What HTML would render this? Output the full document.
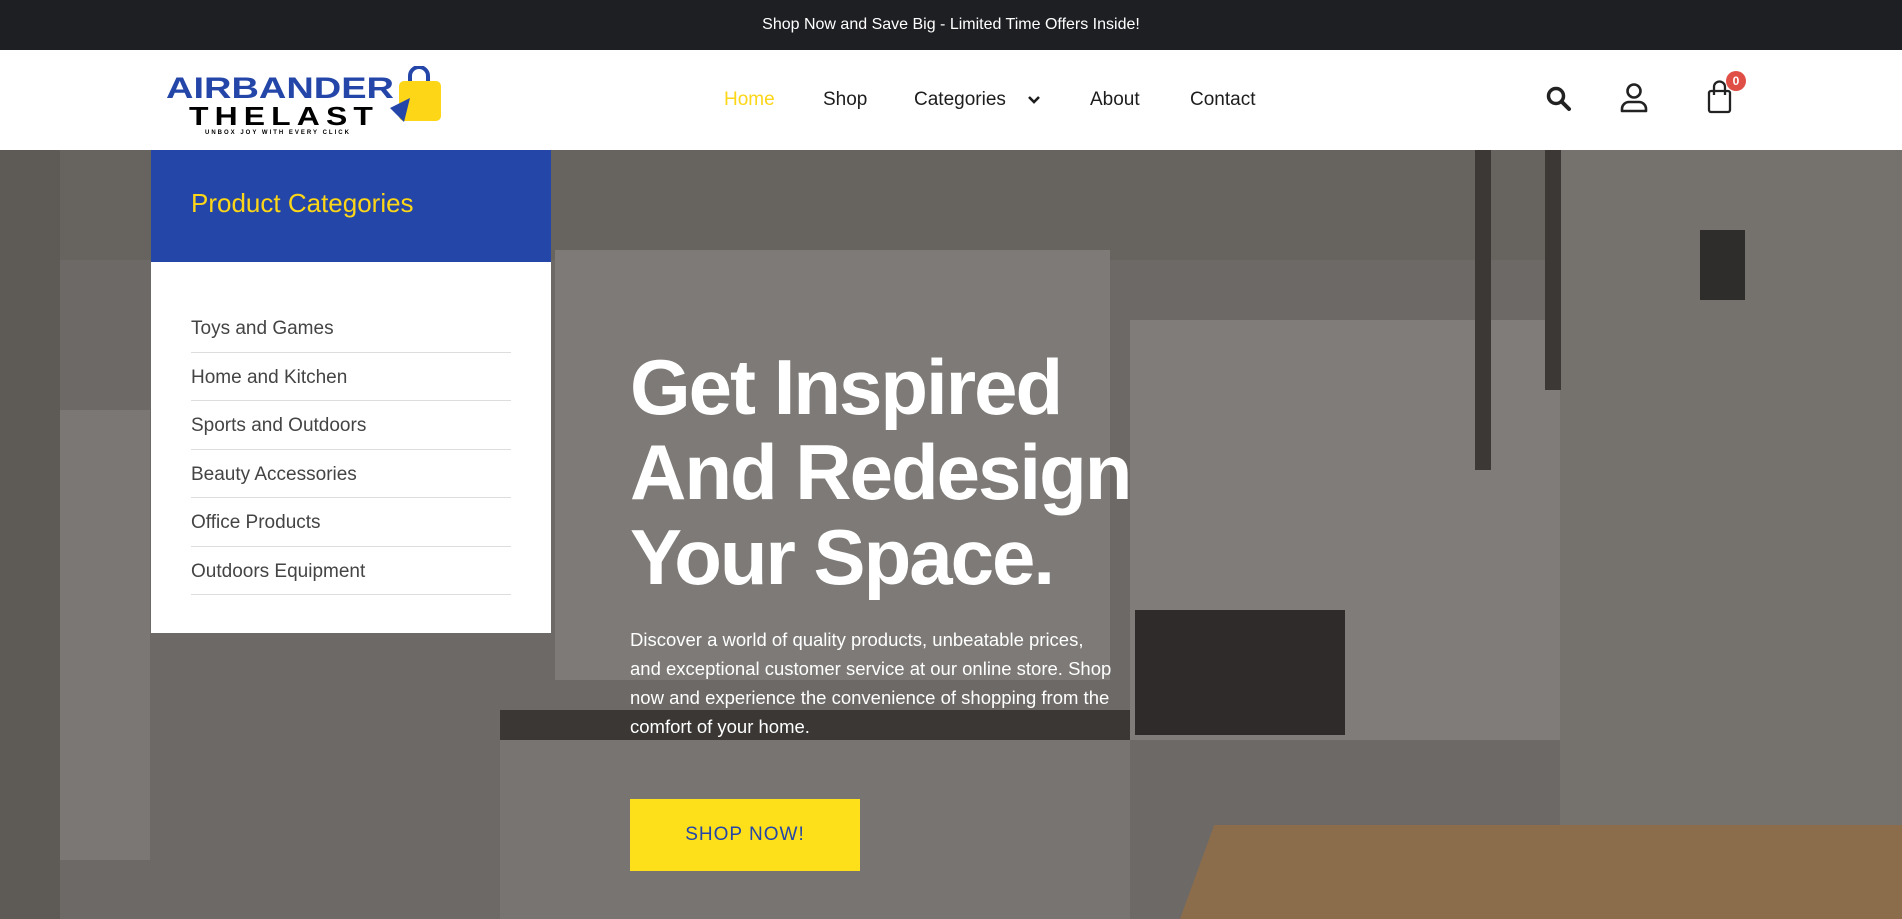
<!DOCTYPE html>
<html><head><meta charset="utf-8"><style>
*{margin:0;padding:0;box-sizing:border-box}
body{width:1902px;height:919px;overflow:hidden;font-family:"Liberation Sans",sans-serif;background:#fff}
.top{height:50px;background:#1e1f23;color:#fff;font-size:16px;text-align:center;line-height:50px}
.hdr{height:100px;position:relative;background:#fff}
.nav a{position:absolute;top:89px;font-size:19px;color:#1d1d1d;text-decoration:none;font-weight:500}
.hero{position:absolute;top:150px;left:0;width:1902px;height:769px;background:#6d6966;overflow:hidden}
.hero div{position:absolute}
.cat{position:absolute;left:151px;top:150px;width:400px}
.cath{height:112px;background:#2446a8;color:#fcd617;font-size:26px;padding:38px 0 0 40px}
.catl{background:#fff;height:371px;padding:42px 40px 0 40px}
.catl div{height:48.5px;border-bottom:1px solid #ddd;font-size:19px;color:#444;padding-top:14px}
h1{position:absolute;left:630px;top:345px;color:#fff;font-size:78px;line-height:85px;font-weight:700;letter-spacing:-2px}
p{position:absolute;left:630px;top:625px;width:540px;color:#fff;font-size:18.5px;line-height:29px}
.btn{position:absolute;left:630px;top:799px;width:230px;height:72px;background:#fde01a;color:#2446a8;font-size:19px;letter-spacing:1px;text-align:center;line-height:72px}
</style></head><body>
<div class="top">Shop Now and Save Big - Limited Time Offers Inside!</div>
<div class="hdr">
<svg style="position:absolute;left:165px;top:16px" width="295" height="70" viewBox="0 0 295 70">
<path d="M245 16 v-6 a9 9 0 0 1 18 0 v6" fill="none" stroke="#2446a8" stroke-width="4"/>
<rect x="234" y="15" width="42" height="40" rx="5" fill="#fcd617"/>
<text x="1" y="32" font-family="Liberation Sans" font-weight="700" font-size="30" fill="#2446a8" textLength="228" lengthAdjust="spacingAndGlyphs">AIRBANDER</text>
<text x="24" y="59" font-family="Liberation Sans" font-weight="700" font-size="26" fill="#000" letter-spacing="5" textLength="190" lengthAdjust="spacingAndGlyphs">THELAST</text>
<path d="M225 42 l20 -10 l-6 24z" fill="#2446a8"/>
<text x="40" y="68" font-family="Liberation Sans" font-weight="700" font-size="6" fill="#000" letter-spacing="2">UNBOX JOY WITH EVERY CLICK</text>
</svg>
<div class="nav">
<a style="left:724px;top:39px;position:absolute;color:#fcd617">Home</a>
<a style="left:823px;top:39px;position:absolute">Shop</a>
<a style="left:914px;top:39px;position:absolute">Categories</a>
<a style="left:1090px;top:39px;position:absolute">About</a>
<a style="left:1190px;top:39px;position:absolute">Contact</a>
</div>
<svg style="position:absolute;left:1027px;top:44px" width="14" height="12" viewBox="0 0 14 12"><path d="M2 3 l5 5 l5 -5" fill="none" stroke="#1d1d1d" stroke-width="2.6"/></svg>
<svg style="position:absolute;left:1545px;top:35px" width="28" height="28" viewBox="0 0 28 28"><circle cx="11" cy="11" r="7.5" fill="none" stroke="#222" stroke-width="3.5"/><path d="M16.5 16.5 L24 24" stroke="#222" stroke-width="4" stroke-linecap="round"/></svg>
<svg style="position:absolute;left:1619px;top:32px" width="30" height="32" viewBox="0 0 30 32"><circle cx="15" cy="9" r="6.5" fill="none" stroke="#222" stroke-width="2.6"/><path d="M3 29 v-2 a7 7 0 0 1 7 -7 h10 a7 7 0 0 1 7 7 v2 z" fill="none" stroke="#222" stroke-width="2.6" stroke-linejoin="round"/></svg>
<svg style="position:absolute;left:1706px;top:30px" width="30" height="34" viewBox="0 0 30 34"><rect x="3" y="11" width="21" height="21" rx="2" fill="none" stroke="#222" stroke-width="2.3"/><path d="M8 15 v-8 a5.5 5.5 0 0 1 11 0 v8" fill="none" stroke="#222" stroke-width="2.3"/></svg>
<div style="position:absolute;left:1726px;top:21px;width:20px;height:20px;border-radius:50%;background:#e04f45;color:#fff;font-size:12px;font-weight:700;text-align:center;line-height:20px">0</div>
</div>
<div class="hero">
<div style="left:0;top:0;width:1902px;height:110px;background:#67635f"></div>
<div style="left:555px;top:100px;width:555px;height:430px;background:#7d7a77"></div>
<div style="left:1130px;top:170px;width:430px;height:420px;background:#7f7c79"></div>
<div style="left:1560px;top:0;width:342px;height:769px;background:#75716d"></div>
<div style="left:0;top:0;width:60px;height:769px;background:#5e5a56"></div>
<div style="left:60px;top:260px;width:90px;height:450px;background:#7a7774"></div>
<div style="left:500px;top:560px;width:630px;height:30px;background:#3a3735"></div>
<div style="left:500px;top:590px;width:630px;height:179px;background:#777471"></div>
<div style="left:1135px;top:460px;width:210px;height:125px;background:#2e2b2a"></div>
<div style="top:675px;width:752px;height:94px;background:#8b6d4c;transform:skewX(-20deg);transform-origin:bottom left;left:1180px"></div>
<div style="left:1475px;top:0;width:16px;height:320px;background:#3b3836"></div>
<div style="left:1545px;top:0;width:16px;height:240px;background:#3b3836"></div>
<div style="left:1700px;top:80px;width:45px;height:70px;background:#2f2d2c"></div>
</div>
<div class="cat"><div class="cath">Product Categories</div>
<div class="catl"><div>Toys and Games</div><div>Home and Kitchen</div><div>Sports and Outdoors</div><div>Beauty Accessories</div><div>Office Products</div><div>Outdoors Equipment</div></div></div>
<h1>Get Inspired<br>And Redesign<br>Your Space.</h1>
<p>Discover a world of quality products, unbeatable prices,<br>and exceptional customer service at our online store. Shop<br>now and experience the convenience of shopping from the<br>comfort of your home.</p>
<div class="btn">SHOP NOW!</div>
</body></html>
